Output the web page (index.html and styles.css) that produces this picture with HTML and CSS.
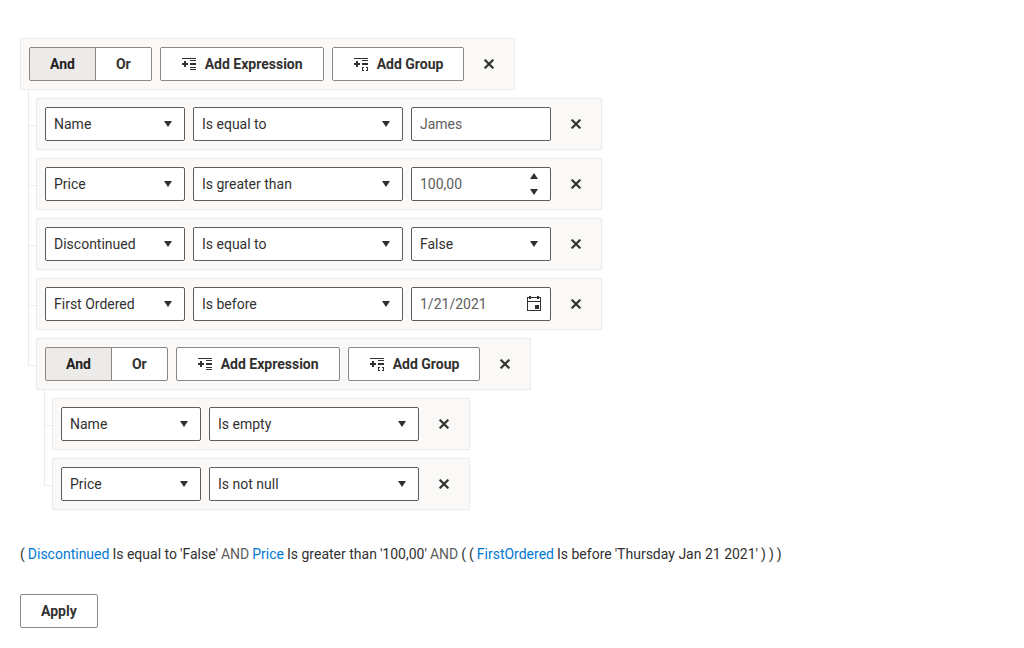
FILE: index.html
```html
<!DOCTYPE html>
<html lang="en">
<head>
<meta charset="utf-8">
<title>Filter</title>
<link rel="stylesheet" href="styles.css">
</head>
<body>
<svg class="sprite" aria-hidden="true">
  <symbol id="caret-down" viewBox="0 0 8 6"><path d="M0 0h8L4 6z"/></symbol>
  <symbol id="caret-up" viewBox="0 0 8 6"><path d="M0 6h8L4 0z"/></symbol>
  <symbol id="close" viewBox="0 0 16 16"><path d="M13 4.4L11.6 3 8 6.6 4.4 3 3 4.4 6.6 8 3 11.6 4.4 13 8 9.4l3.6 3.6 1.4-1.4L9.4 8z" stroke="currentColor" stroke-width=".2"/></symbol>
  <symbol id="add-expression" viewBox="0 0 16 16"><path d="M1 2h14v1H1zM9 4h6v1H9zM9 7h6v2H9zM9 11h6v1H9zM9 13h6v1H9zM3 5h2v2h2v2H5v2H3V9H1V7h2z"/></symbol>
  <symbol id="add-group" viewBox="0 0 16 16"><path d="M1 2h14v1H1zM9 4h6v1H9zM9 7h6v2H9zM3 5h2v2h2v2H5v2H3V9H1V7h2zM9 11h2v1h-1v2h1v1H9zM13 11h2v4h-2v-1h1v-2h-1z"/></symbol>
  <symbol id="calendar" viewBox="0 0 16 16"><path d="M3 0h2v3H3zM11 0h2v3h-2zM9 9h4v4H9z"/><path fill-rule="evenodd" d="M1 1h14v14H1zM2 2v3h12V2zM2 6v8h12V6z"/></symbol>
</svg>
<main class="page">
  <form class="filter">
    <div class="toolbar">
      <div class="button-group" role="group" aria-label="Logic">
        <button type="button" class="button selected" aria-pressed="true">And</button>
        <button type="button" class="button" aria-pressed="false">Or</button>
      </div>
      <button type="button" class="button"><svg class="icon"><use href="#add-expression"/></svg>Add Expression</button>
      <button type="button" class="button"><svg class="icon"><use href="#add-group"/></svg>Add Group</button>
      <button type="button" class="remove" aria-label="Remove group"><svg class="icon"><use href="#close"/></svg></button>
    </div>
    <ul class="tree">
      <li class="node">
        <div class="toolbar">
          <div class="field"><select class="input" aria-label="Field"><option>Name</option></select><svg class="caret"><use href="#caret-down"/></svg></div>
          <div class="field wide"><select class="input" aria-label="Operator"><option>Is equal to</option></select><svg class="caret"><use href="#caret-down"/></svg></div>
          <div class="field"><input class="input value" type="text" aria-label="Value" value="James"></div>
          <button type="button" class="remove" aria-label="Remove expression"><svg class="icon"><use href="#close"/></svg></button>
        </div>
      </li>
      <li class="node">
        <div class="toolbar">
          <div class="field"><select class="input" aria-label="Field"><option>Price</option></select><svg class="caret"><use href="#caret-down"/></svg></div>
          <div class="field wide"><select class="input" aria-label="Operator"><option>Is greater than</option></select><svg class="caret"><use href="#caret-down"/></svg></div>
          <div class="field">
            <input class="input value" type="text" inputmode="decimal" aria-label="Value" value="100,00">
            <div class="spinner">
              <button type="button" class="adornment" aria-label="Increase"><svg class="arrow"><use href="#caret-up"/></svg></button>
              <button type="button" class="adornment" aria-label="Decrease"><svg class="arrow"><use href="#caret-down"/></svg></button>
            </div>
          </div>
          <button type="button" class="remove" aria-label="Remove expression"><svg class="icon"><use href="#close"/></svg></button>
        </div>
      </li>
      <li class="node">
        <div class="toolbar">
          <div class="field"><select class="input" aria-label="Field"><option>Discontinued</option></select><svg class="caret"><use href="#caret-down"/></svg></div>
          <div class="field wide"><select class="input" aria-label="Operator"><option>Is equal to</option></select><svg class="caret"><use href="#caret-down"/></svg></div>
          <div class="field"><select class="input" aria-label="Value"><option>False</option></select><svg class="caret"><use href="#caret-down"/></svg></div>
          <button type="button" class="remove" aria-label="Remove expression"><svg class="icon"><use href="#close"/></svg></button>
        </div>
      </li>
      <li class="node">
        <div class="toolbar">
          <div class="field"><select class="input" aria-label="Field"><option>First Ordered</option></select><svg class="caret"><use href="#caret-down"/></svg></div>
          <div class="field wide"><select class="input" aria-label="Operator"><option>Is before</option></select><svg class="caret"><use href="#caret-down"/></svg></div>
          <div class="field">
            <input class="input value" type="text" aria-label="Value" value="1/21/2021">
            <button type="button" class="adornment picker" aria-label="Open calendar"><svg class="icon"><use href="#calendar"/></svg></button>
          </div>
          <button type="button" class="remove" aria-label="Remove expression"><svg class="icon"><use href="#close"/></svg></button>
        </div>
      </li>
      <li class="node">
        <div class="toolbar">
          <div class="button-group" role="group" aria-label="Logic">
            <button type="button" class="button selected" aria-pressed="true">And</button>
            <button type="button" class="button" aria-pressed="false">Or</button>
          </div>
          <button type="button" class="button"><svg class="icon"><use href="#add-expression"/></svg>Add Expression</button>
          <button type="button" class="button"><svg class="icon"><use href="#add-group"/></svg>Add Group</button>
          <button type="button" class="remove" aria-label="Remove group"><svg class="icon"><use href="#close"/></svg></button>
        </div>
        <ul class="tree">
          <li class="node">
            <div class="toolbar">
              <div class="field"><select class="input" aria-label="Field"><option>Name</option></select><svg class="caret"><use href="#caret-down"/></svg></div>
              <div class="field wide"><select class="input" aria-label="Operator"><option>Is empty</option></select><svg class="caret"><use href="#caret-down"/></svg></div>
              <button type="button" class="remove" aria-label="Remove expression"><svg class="icon"><use href="#close"/></svg></button>
            </div>
          </li>
          <li class="node">
            <div class="toolbar">
              <div class="field"><select class="input" aria-label="Field"><option>Price</option></select><svg class="caret"><use href="#caret-down"/></svg></div>
              <div class="field wide"><select class="input" aria-label="Operator"><option>Is not null</option></select><svg class="caret"><use href="#caret-down"/></svg></div>
              <button type="button" class="remove" aria-label="Remove expression"><svg class="icon"><use href="#close"/></svg></button>
            </div>
          </li>
        </ul>
      </li>
    </ul>
  </form>
  <p class="summary">
    <span>(</span>
    <span class="name">Discontinued</span>
    <span>Is equal to</span>
    <span>'False'</span>
    <span class="logic">AND</span>
    <span class="name">Price</span>
    <span>Is greater than</span>
    <span>'100,00'</span>
    <span class="logic">AND</span>
    <span>(</span>
    <span>(</span>
    <span class="name">FirstOrdered</span>
    <span>Is before</span>
    <span>'Thursday Jan 21 2021'</span>
    <span>)</span>
    <span>)</span>
    <span>)</span>
  </p>
  <button type="button" class="button">Apply</button>
</main>
</body>
</html>
```
FILE: styles.css
```css
* {
  box-sizing: border-box;
}

body {
  margin: 0;
  background: #fff;
  color: #323130;
  font: 14px/20px Roboto, sans-serif;
}

.sprite {
  position: absolute;
  width: 0;
  height: 0;
}

.page {
  padding: 38px 20px 20px;
}

.toolbar {
  display: flex;
  gap: 8px;
  width: fit-content;
  padding: 8px;
  border: 1px solid #edebe9;
  background: #faf9f8;
}

.button {
  display: inline-flex;
  align-items: center;
  justify-content: center;
  gap: 8px;
  height: 34px;
  padding: 0 20px;
  border: 1px solid #8a8886;
  border-radius: 2px;
  background: #fff;
  color: #323130;
  font: inherit;
  font-weight: 700;
  white-space: nowrap;
}

.button-group {
  display: flex;
}

.button-group .button:first-child {
  border-radius: 2px 0 0 2px;
}

.button-group .button:last-child {
  margin-left: -1px;
  border-radius: 0 2px 2px 0;
}

.button.selected {
  background: #edebe9;
  color: #201f1e;
}

.icon {
  width: 16px;
  height: 16px;
  fill: currentColor;
}

.remove {
  display: grid;
  place-items: center;
  width: 34px;
  height: 34px;
  padding: 0;
  border: 0;
  background: none;
  color: #323130;
}

.tree {
  display: flex;
  flex-direction: column;
  gap: 8px;
  margin: 8px 0 0;
  padding: 0 0 0 8px;
  list-style: none;
}

.node {
  position: relative;
  padding-left: 8px;
}

.node::before {
  content: "";
  position: absolute;
  top: -8px;
  left: 0;
  width: 8px;
  height: 35px;
  border: solid #edebe9;
  border-width: 0 0 1px 1px;
}

.node:not(:last-child)::after {
  content: "";
  position: absolute;
  top: 27px;
  bottom: 0;
  left: 0;
  border-left: 1px solid #edebe9;
}

.field {
  display: grid;
  grid-template-columns: 1fr 32px;
  align-items: center;
  width: 140px;
  height: 34px;
  border: 1px solid #605e5c;
  border-radius: 2px;
  background: #fff;
}

.field.wide {
  width: 210px;
}

.input {
  grid-area: 1 / 1 / 2 / 3;
  width: 100%;
  height: 32px;
  margin: 0;
  padding: 0 8px;
  border: 0;
  background: none;
  color: #323130;
  font: inherit;
  appearance: none;
}

.input.value {
  color: #605e5c;
}

.caret {
  grid-area: 1 / 2;
  justify-self: center;
  width: 8px;
  height: 6px;
  fill: #323130;
  pointer-events: none;
}

.arrow {
  width: 8px;
  height: 6px;
  fill: #323130;
}

.spinner {
  grid-area: 1 / 2;
  display: grid;
  grid-template-rows: 16px 16px;
}

.adornment {
  display: grid;
  place-items: center;
  width: 32px;
  padding: 0;
  border: 0;
  background: none;
  color: #323130;
}

.picker {
  grid-area: 1 / 2;
  height: 32px;
}

.summary {
  display: flex;
  flex-wrap: wrap;
  column-gap: 3px;
  margin: 34px 0 30px;
}

.name {
  color: #0078d4;
}

.logic {
  color: #605e5c;
}
```
